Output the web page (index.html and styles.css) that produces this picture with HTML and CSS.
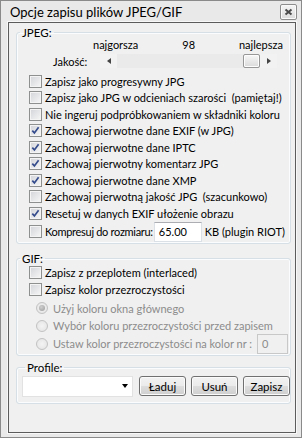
FILE: index.html
```html
<!DOCTYPE html>
<html lang="pl">
<head>
    <meta charset="UTF-8">
    <title>Opcje zapisu plików JPEG/GIF</title>
    <link rel="stylesheet" href="styles.css">
</head>
<body>

    <div class="window">
        <div class="titlebar">
            <span class="title">Opcje zapisu plików JPEG/GIF</span>
            <span class="close">
                <svg width="9" height="8" viewBox="0 0 9 8"><path d="M1.5 1.5 L7.5 6.5 M7.5 1.5 L1.5 6.5" stroke="#4a4a4a" stroke-width="2"/></svg>
            </span>
        </div>

        <div class="client">
            <fieldset class="group group-jpeg">
                <legend>JPEG:</legend>
                <div class="scale">
                    <span>najgorsza</span>
                    <span>98</span>
                    <span>najlepsza</span>
                </div>
                <div class="quality">
                    <span class="quality-label">Jakość:</span>
                    <div class="slider">
                        <span class="arrow arrow-left"></span>
                        <span class="track"><span class="thumb"></span></span>
                        <span class="arrow arrow-right"></span>
                    </div>
                </div>

                <div class="check"><span class="box"></span>Zapisz jako progresywny JPG</div>
                <div class="check"><span class="box"></span>Zapisz jako JPG w odcieniach szarości &nbsp;(pamiętaj!)</div>
                <div class="check"><span class="box"></span>Nie ingeruj podpróbkowaniem w składniki koloru</div>
                <div class="check"><span class="box checked"></span>Zachowaj pierwotne dane EXIF (w JPG)</div>
                <div class="check"><span class="box checked"></span>Zachowaj pierwotne dane IPTC</div>
                <div class="check"><span class="box checked"></span>Zachowaj pierwotny komentarz JPG</div>
                <div class="check"><span class="box checked"></span>Zachowaj pierwotne dane XMP</div>
                <div class="check"><span class="box"></span>Zachowaj pierwotną jakość JPG &nbsp;(szacunkowo)</div>
                <div class="check"><span class="box checked"></span>Resetuj w danych EXIF ułożenie obrazu</div>
                <div class="check compress">
                    <span class="box"></span><span class="compress-label">Kompresuj do rozmiaru:</span>
                    <span class="textbox size-box">65.00</span>
                    KB (plugin RIOT)
                </div>
            </fieldset>

            <fieldset class="group group-gif">
                <legend>GIF:</legend>
                <div class="check"><span class="box"></span>Zapisz z przeplotem (interlaced)</div>
                <div class="check"><span class="box"></span>Zapisz kolor przezroczystości</div>
                <div class="radio disabled"><span class="dot selected"></span>Użyj koloru okna głównego</div>
                <div class="radio disabled"><span class="dot"></span>Wybór koloru przezroczystości przed zapisem</div>
                <div class="radio disabled color-nr">
                    <span class="dot"></span>Ustaw kolor przezroczystości na kolor nr :
                    <span class="textbox nr-box">0</span>
                </div>
            </fieldset>

            <fieldset class="group group-profile">
                <legend>Profile:</legend>
                <div class="profile-row">
                    <div class="combo"><span class="combo-arrow"></span></div>
                    <button class="btn">Ładuj</button>
                    <button class="btn">Usuń</button>
                    <button class="btn">Zapisz</button>
                </div>
            </fieldset>
        </div>
    </div>

</body>
</html>
```

FILE: styles.css
```css
:root {
    --ui-font: Lato, 'Open Sans', sans-serif;
    --frame: #e9e9e9;
    --face: #f0f0f0;
    --group-border: #d5dfe5;
    --gray-text: #8c8c8c;
}

* {
    box-sizing: border-box;
}

body {
    margin: 0;
    font-family: var(--ui-font);
    font-size: 11px;
    color: #000;
    background: #fff;
}

.window {
    width: 302px;
    height: 438px;
    display: flex;
    flex-direction: column;
    background: var(--frame);
    border: 1px solid #8a8a8a;
}

.titlebar {
    height: 21px;
    display: flex;
    align-items: flex-start;
    justify-content: space-between;
}

.title {
    font-size: 13px;
    padding: 3px 0 0 9px;
    line-height: 16px;
}

.close {
    width: 17px;
    height: 16px;
    margin: 3px 4px 0 0;
    display: flex;
    align-items: center;
    justify-content: center;
    border: 1px solid #8d8d8d;
    border-radius: 2px;
    background: linear-gradient(#f6f6f6, #dcdcdc);
    box-shadow: inset 0 0 0 1px #fafafa;
}

.client {
    flex: 1;
    margin: 0 5px 4px 7px;
    padding: 3px 4px 0 7px;
    background: var(--face);
    border: 1px solid #5c5c5c;
    box-shadow: 0 0 0 1px #f8f8f8;
}

/* group boxes */

.group {
    min-width: 0;
    margin: 0;
    padding: 0;
    border: 1px solid var(--group-border);
    border-radius: 3px;
    box-shadow: inset 0 0 0 1px #fafcfd;
}

.group legend {
    margin-left: 3px;
    padding: 0 2px;
    line-height: 13px;
    font-size: 11.5px;
}

.group-jpeg {
    padding-bottom: 1px;
}

.group-gif {
    margin-top: 8px;
    padding-bottom: 1px;
}

.group-profile {
    margin-top: 5px;
    padding: 2px 0 6px 5px;
}

/* quality slider */

.scale {
    margin-top: -2px;
    height: 15px;
    line-height: 15px;
    display: flex;
    justify-content: space-between;
    padding: 0 7px 0 76px;
}

.quality {
    height: 18px;
    display: flex;
    align-items: center;
    padding-left: 36px;
}

.quality-label {
    width: 47px;
}

.slider {
    width: 177px;
    height: 14px;
    display: flex;
    background: #eaeaea;
}

.arrow {
    width: 17px;
    display: flex;
    align-items: center;
    justify-content: center;
    background: #f2f2f2;
}

.arrow::before {
    content: '';
    border-top: 3.5px solid transparent;
    border-bottom: 3.5px solid transparent;
}

.arrow-left::before {
    border-right: 4px solid #444;
}

.arrow-right::before {
    border-left: 4px solid #444;
}

.track {
    flex: 1;
    display: flex;
    justify-content: flex-end;
}

.thumb {
    width: 17px;
    height: 14px;
    border: 1px solid #979797;
    border-radius: 2px;
    background: linear-gradient(#f7f7f7, #dadada);
    box-shadow: inset 0 0 0 1px #fdfdfd;
}

/* checkboxes */

.check {
    height: 16.5px;
    display: flex;
    align-items: center;
    padding-left: 12px;
    white-space: nowrap;
}

.quality + .check {
    margin-top: 3px;
}

.box {
    width: 13px;
    height: 13px;
    flex: none;
    margin-right: 3px;
    border: 1px solid #8e8f8f;
    background: linear-gradient(135deg, #d2d4d8, #f7f7f7);
    box-shadow: inset 0 0 0 1px #f4f4f4;
}

.box.checked {
    background:
        url("data:image/svg+xml,%3Csvg xmlns='http://www.w3.org/2000/svg' width='11' height='11'%3E%3Cpath d='M2.3 5.6 L4.4 7.9 L8.6 2.2' fill='none' stroke='%23354c8c' stroke-width='1.7'/%3E%3C/svg%3E") center no-repeat,
        linear-gradient(135deg, #d2d4d8, #f7f7f7);
}

.compress {
    height: 20px;
}

.compress-label {
    letter-spacing: -0.3px;
}

.textbox {
    height: 20px;
    display: inline-flex;
    align-items: center;
    padding-left: 4px;
    background: #fff;
    border: 1px solid #dbdfe6;
    border-top-color: #abadb3;
}

.size-box {
    width: 48px;
    margin: 0 3px 0 1px;
}

/* radio buttons */

.radio {
    height: 17.5px;
    display: flex;
    align-items: center;
    padding-left: 19px;
    white-space: nowrap;
}

.radio.disabled {
    color: var(--gray-text);
}

.check + .radio {
    margin-top: 2px;
}

.dot {
    width: 12px;
    height: 12px;
    flex: none;
    margin-right: 5px;
    border-radius: 50%;
    border: 1px solid #c2c2c2;
    background: radial-gradient(circle, #f4f4f4, #e2e2e2);
    display: flex;
    align-items: center;
    justify-content: center;
}

.dot.selected::before {
    content: '';
    width: 6px;
    height: 6px;
    border-radius: 50%;
    background: radial-gradient(circle at 40% 35%, #cfcfcf, #9a9a9a);
}

.color-nr {
    height: 20px;
    margin-top: -1px;
}

.nr-box {
    width: 31px;
    margin-left: auto;
    margin-right: 2px;
    color: var(--gray-text);
    background: var(--face);
    border-color: #c8c8c8;
}

/* profile row */

.profile-row {
    display: flex;
    align-items: center;
    height: 21px;
}

.combo {
    width: 111px;
    height: 21px;
    display: flex;
    align-items: center;
    justify-content: flex-end;
    padding-right: 4px;
    background: #fff;
    border: 1px solid #e2e2e2;
}

.combo-arrow {
    border-left: 3.5px solid transparent;
    border-right: 3.5px solid transparent;
    border-top: 4px solid #000;
}

.btn {
    height: 20px;
    width: 47px;
    margin-left: 6px;
    padding: 0;
    font-family: var(--ui-font);
    font-size: 11.5px;
    color: #000;
    border: 1px solid #707070;
    border-radius: 3px;
    background: linear-gradient(#f2f2f2, #ebebeb 50%, #dddddd 50%, #cfcfcf);
    box-shadow: inset 0 0 0 1px #fbfbfb;
}

.btn + .btn {
    margin-left: 5px;
}
```
